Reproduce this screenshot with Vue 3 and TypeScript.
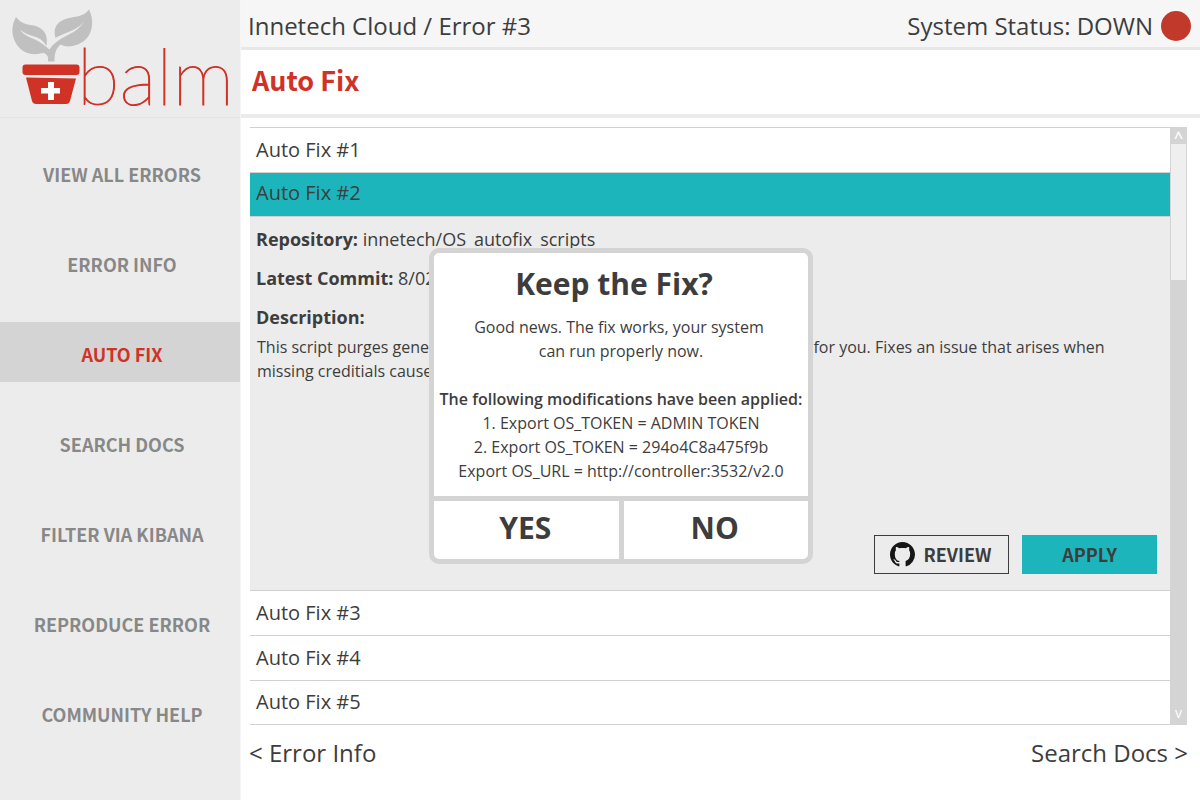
<script setup lang="ts">
import { ref } from 'vue'

interface Fix {
  id: number
  label: string
}

const navItems: string[] = [
  'View All Errors',
  'Error Info',
  'Auto Fix',
  'Search Docs',
  'Filter via Kibana',
  'Reproduce Error',
  'Community Help',
]
const activeNav = ref('Auto Fix')

const fixes: Fix[] = [1, 2, 3, 4, 5].map((id) => ({ id, label: `Auto Fix #${id}` }))
const openFix = ref(2)
const dialogOpen = ref(true)
</script>

<template>
  <div class="app">
    <aside class="sidebar">
      <a class="logo" href="#" aria-label="balm">
        <svg class="logo-art" viewBox="0 0 240 117" aria-hidden="true">
          <path fill="#c0c0c0" d="M16 17C20 22 24 24 30 25C41 26 49 32 46.500 46C43 40 39 38 34 36.500C28 34.500 23 32.500 20 29.500C24 36 31 37.500 36 40C41 42.500 45 45.500 49.300 49.500C53 44 59 39.500 65 36.500C73 32.500 79 29.500 84 22C79 28 71 31 66 33C61 35 58 36.500 55.500 38C53 29 56 23 64 19.500C72 16 83 18 89 9.500C94 19 93 31 87 38C81 45 69 49 60.500 44.500C56 49 54.500 53 54.500 61.500H48V57C46 53.500 44 52 40 53.500C31 56 22 52 17 45C11 36 11 26 16 17Z" />
          <g fill="#d03226">
            <rect x="22.500" y="64.500" width="57" height="10.500" rx="3" />
            <path d="M26 77.500L76 78.500L70 101Q69 104 66 104H36Q33 104 32 101Z" />
          </g>
          <path d="M48 82h6v6h6v5.500h-6v6.500h-6v-6.500h-7v-5.500h7z" fill="#fff" />
          <text class="wordmark" x="77" y="105">balm</text>
        </svg>
      </a>
      <nav class="nav">
        <a
          v-for="item in navItems"
          :key="item"
          href="#"
          class="nav-item"
          :class="{ active: item === activeNav }"
          @click.prevent="activeNav = item"
        >{{ item }}</a>
      </nav>
    </aside>

    <main class="main">
      <header class="topbar">
        <span>Innetech Cloud / Error #3</span>
        <span class="status">System Status: DOWN <i class="dot"></i></span>
      </header>
      <div class="title-bar"><h1>Auto Fix</h1></div>

      <section class="panel">
        <div class="list">
          <template v-for="fix in fixes" :key="fix.id">
            <button class="row" :class="{ open: fix.id === openFix }" @click="openFix = fix.id">
              {{ fix.label }}
            </button>
            <article v-if="fix.id === openFix" class="detail">
              <p class="field"><b>Repository:</b> innetech/OS_autofix_scripts</p>
              <p class="field"><b>Latest Commit:</b> 8/02/2015</p>
              <p class="field"><b>Description:</b></p>
              <p class="description">
                This script purges generated credentials and also exports the new settings for you. Fixes an issue that arises when missing creditials cause a failure.
              </p>
              <div class="actions">
                <button class="action review">
                  <svg width="25" height="25" viewBox="0 0 16 16" aria-hidden="true">
                    <path fill="#161616" d="M8 0C3.580 0 0 3.580 0 8c0 3.540 2.290 6.530 5.470 7.590.4.070.55-.17.55-.38 0-.19-.01-.82-.01-1.490-2.010.37-2.530-.49-2.690-.94-.09-.23-.48-.94-.82-1.130-.28-.15-.68-.52-.01-.53.63-.01 1.080.58 1.230.82.72 1.210 1.870.87 2.330.66V12.200C4.200 12 3.100 10.500 3.100 7.700 3.100 6.400 3.300 5.800 3.800 5.200 3.600 4.400 3.600 3.700 3.800 3.200 4.600 3.100 5.300 3.600 6 4.020 7.300 3.750 8.700 3.750 10 4.020 10.700 3.600 11.400 3.100 12.200 3.200 12.400 3.700 12.400 4.400 12.200 5.200 12.700 5.800 12.900 6.400 12.900 7.700 12.900 10.200 11.800 11.600 9.990 12.200V15.200c0 .21.15.46.55.38A8.010 8.010 0 0 0 16 8c0-4.420-3.580-8-8-8z" />
                  </svg>
                  Review
                </button>
                <button class="action apply">Apply</button>
              </div>
            </article>
          </template>
        </div>
        <div class="scrollbar">
          <button class="arrow" aria-label="Scroll up">^</button>
          <div class="thumb"></div>
          <button class="arrow down" aria-label="Scroll down">v</button>
        </div>
      </section>

      <footer class="pager">
        <a href="#">&lt; Error Info</a>
        <a href="#">Search Docs &gt;</a>
      </footer>
    </main>

    <div v-if="dialogOpen" class="dialog" role="dialog" aria-labelledby="dialog-title">
      <div class="dialog-body">
        <h2 id="dialog-title">Keep the Fix?</h2>
        <p>Good news. The fix works, your system&nbsp;<br />can run properly now.</p>
        <p class="mods">
          <b>The following modifications have been applied:</b><br />
          1. Export OS_TOKEN = ADMIN TOKEN<br />
          2. Export OS_TOKEN = 294o4C8a475f9b<br />
          Export OS_URL = http://controller:3532/v2.0
        </p>
      </div>
      <div class="choices">
        <button @click="dialogOpen = false">YES</button>
        <button @click="dialogOpen = false">NO</button>
      </div>
    </div>
  </div>
</template>

<style>
body {
  margin: 0;
}
</style>

<style scoped>
.app {
  position: relative;
  display: flex;
  min-height: 100vh;
  background: #fff;
  color: #3d3d3d;
  font-family: "Open Sans", "Noto Sans", sans-serif;
}
.app *,
.app {
  box-sizing: border-box;
}
h1,
h2,
p {
  margin: 0;
}
a {
  color: inherit;
  text-decoration: none;
}
button {
  margin: 0;
  padding: 0;
  border: 0;
  background: none;
  color: inherit;
  font-family: inherit;
  cursor: pointer;
}
.sidebar {
  flex: 0 0 241px;
  border-right: 1px solid #f5f5f5;
  background: #ececec;
}
.logo {
  display: block;
  height: 118px;
  border-bottom: 1px solid #e4e4e4;
}
.logo-art {
  display: block;
  width: 100%;
  height: 117px;
  overflow: visible;
}
.wordmark {
  fill: #d03226;
  stroke: #d03226;
  stroke-width: 1px;
  font-family: Lato, sans-serif;
  font-size: 78px;
  font-weight: 100;
  line-height: 1;
}
.nav {
  display: flex;
  flex-direction: column;
  gap: 30px;
  padding-top: 24px;
}
.nav-item {
  height: 60px;
  padding: 6px 0 0 4px;
  color: #888;
  font-family: "Noto Sans CJK SC", sans-serif;
  font-size: 18px;
  font-weight: 700;
  line-height: 52px;
  text-align: center;
  text-transform: uppercase;
}
.nav-item.active {
  background: #d4d4d4;
  color: #d03226;
}
.main {
  display: flex;
  flex: 1;
  flex-direction: column;
  min-width: 0;
}
.topbar {
  display: flex;
  align-items: center;
  justify-content: space-between;
  height: 50px;
  padding: 4px 9px 0 7px;
  border-bottom: 3px solid #e7e7e7;
  background: #f6f6f6;
  font-size: 24px;
}
.status {
  display: flex;
  align-items: center;
  gap: 8px;
}
.dot {
  width: 30px;
  height: 30px;
  border-radius: 50%;
  background: #c0392b;
}
.title-bar {
  height: 68px;
  padding-left: 11px;
  border-bottom: 4px solid #ebebeb;
}
h1 {
  color: #d03226;
  font-family: "Noto Sans CJK SC", sans-serif;
  font-size: 27px;
  font-weight: 700;
  line-height: 60px;
}
.panel {
  display: flex;
  margin: 9px 13px 0 9px;
}
.list {
  flex: 1;
  border-bottom: 1px solid #d0d0d0;
}
.row {
  display: block;
  width: 100%;
  height: 45px;
  padding: 0 6px 1px;
  border-top: 1px solid #d0d0d0;
  font-size: 20px;
  line-height: 42px;
  text-align: left;
}
.row.open {
  height: 44px;
  padding-bottom: 4px;
  background: #1cb5bc;
  line-height: 40px;
}
.row:last-child {
  height: 44px;
  padding-bottom: 2px;
}
.detail {
  display: flex;
  flex-direction: column;
  min-height: 374px;
  padding: 3px 13px 16px 6px;
  border-top: 1px solid #d0d0d0;
  background: #ececec;
}
.field {
  font-size: 18px;
  line-height: 39px;
}
.description {
  margin-top: -2px;
  padding: 0 44px 0 1px;
  font-size: 16px;
  line-height: 24px;
}
.actions {
  display: flex;
  gap: 13px;
  justify-content: flex-end;
  margin-top: auto;
}
.action {
  display: flex;
  align-items: center;
  justify-content: center;
  gap: 9px;
  width: 135px;
  height: 39px;
  padding-bottom: 2px;
  font-family: "Noto Sans CJK SC", sans-serif;
  font-size: 18px;
  font-weight: 700;
  text-transform: uppercase;
}
.review {
  padding: 0 2px 1px 0;
  border: 1px solid #3d3d3d;
}
.apply {
  background: #1cb5bc;
}
.scrollbar {
  display: flex;
  flex: 0 0 17px;
  flex-direction: column;
  background: #d4d4d4;
}
.arrow {
  height: 17px;
  color: #fff;
  font-size: 16px;
  font-weight: 600;
  line-height: 20px;
}
.arrow.down {
  height: 20px;
  margin-top: auto;
  padding-bottom: 4px;
  font-size: 14px;
  font-weight: 400;
  line-height: 12px;
}
.thumb {
  height: 136px;
  margin: 0 1px;
  background: #efefef;
}
.pager {
  display: flex;
  justify-content: space-between;
  padding: 11px 12px 12px 8px;
  font-size: 24px;
  line-height: 33px;
}
.dialog {
  position: absolute;
  top: 248px;
  left: calc(50% - 171px);
  width: 384px;
  border: 5px solid #d4d4d4;
  border-radius: 10px;
  background: #fff;
  text-align: center;
}
.dialog-body {
  padding: 10px 0 13px;
  border-bottom: 5px solid #d4d4d4;
  font-size: 16px;
  line-height: 24px;
}
h2 {
  margin-bottom: 10px;
  padding-right: 14px;
  font-size: 30px;
  line-height: 42px;
}
.mods {
  margin-top: 24px;
  white-space: nowrap;
}
.mods b {
  font-weight: 600;
}
.choices {
  display: flex;
}
.choices button {
  flex: 1;
  height: 58px;
  padding: 0 2px 6px 0;
  font-size: 30px;
  font-weight: 700;
}
.choices button + button {
  border-left: 5px solid #d4d4d4;
}
</style>
